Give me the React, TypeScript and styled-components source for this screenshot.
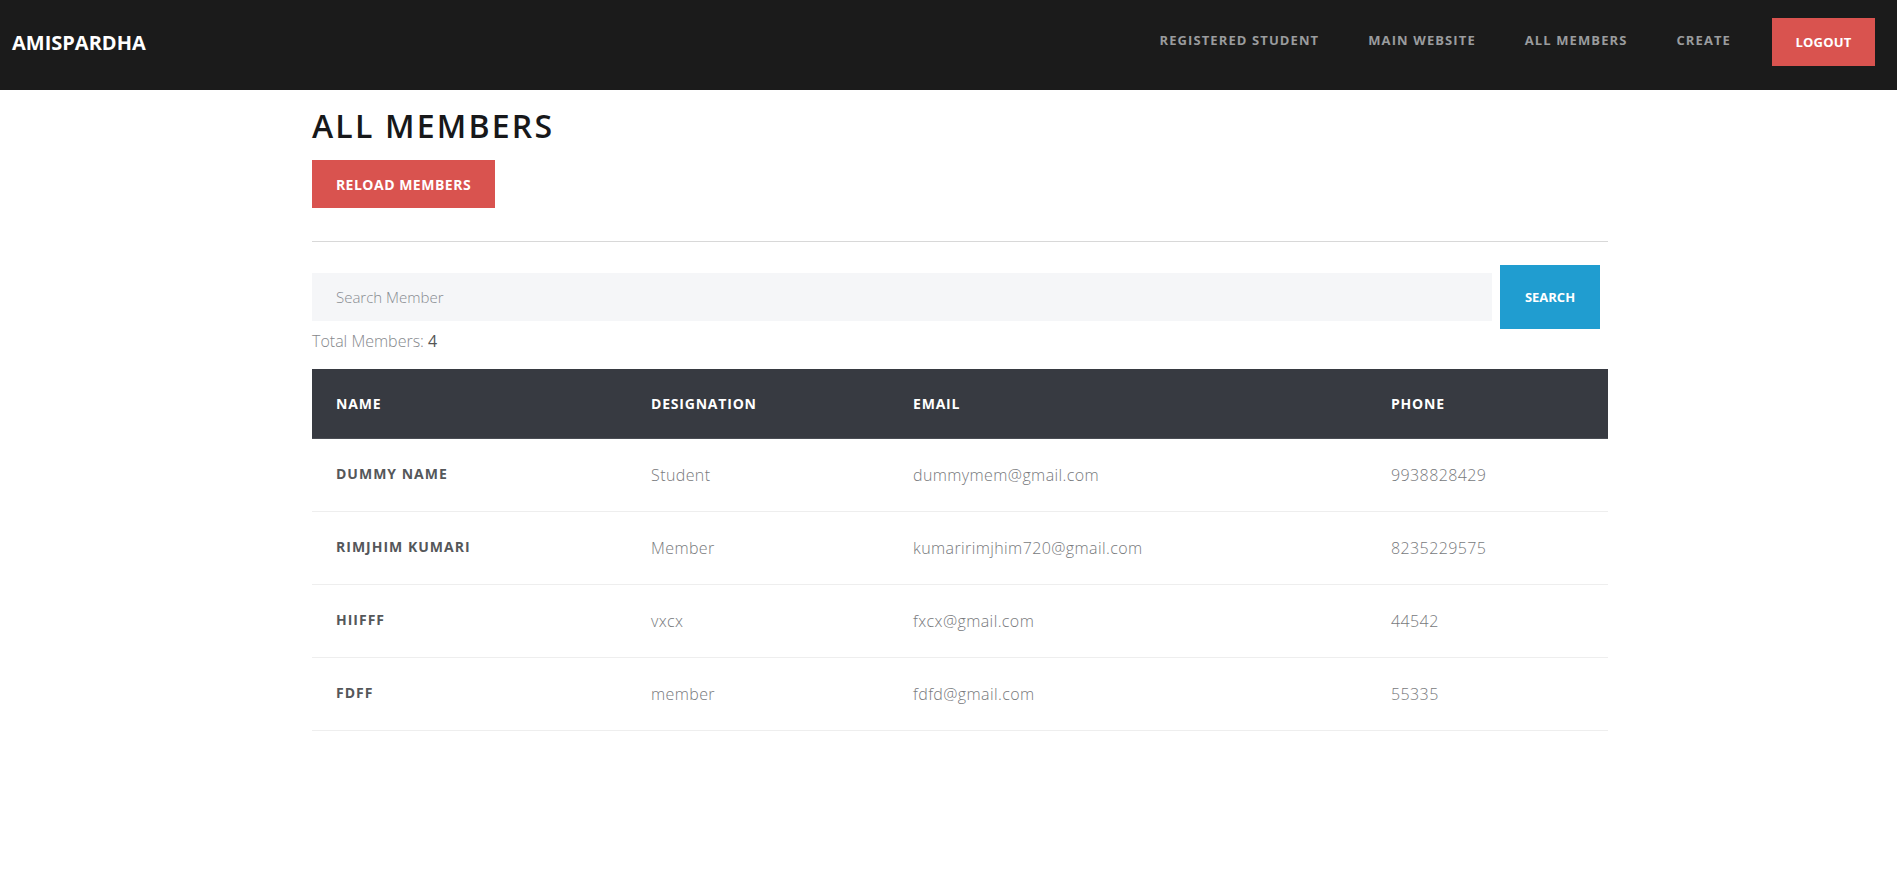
import React from "react";
import styled, { createGlobalStyle } from "styled-components";

const GlobalStyle = createGlobalStyle`
  html, body {
    margin: 0;
    padding: 0;
    background: #ffffff;
    font-family: "Open Sans", "Noto Sans", Arial, sans-serif;
  }
  * { box-sizing: border-box; }
`;

const NavBar = styled.header`
  height: 90px;
  background: #1b1b1b;
  display: flex;
  align-items: center;
  justify-content: space-between;
  padding: 0 22px 6px 12px;
`;

const Brand = styled.div`
  color: #ffffff;
  font-size: 20px;
  font-weight: 700;
`;

const NavRight = styled.nav`
  display: flex;
  align-items: center;
`;

const NavList = styled.ul`
  display: flex;
  align-items: center;
  gap: 49px;
  margin: 0 0 4px;
  padding: 0;
  list-style: none;
`;

const NavLink = styled.li`
  color: #9a9c9e;
  font-size: 13px;
  font-weight: 700;
  letter-spacing: 1.1px;
  text-transform: uppercase;
`;

const Button = styled.button<{ $color: string }>`
  border: none;
  background: ${(p) => p.$color};
  color: #ffffff;
  font-family: inherit;
  font-weight: 700;
  font-size: 13px;
  text-transform: uppercase;
  cursor: pointer;
  display: flex;
  align-items: center;
  justify-content: center;
  padding: 0;
`;

const LogoutButton = styled(Button)`
  width: 103px;
  height: 48px;
  margin-left: 41px;
  letter-spacing: 0.2px;
`;

const Container = styled.main`
  width: 1296px;
  margin-left: calc(50% - 636.5px);
`;

const Title = styled.h1`
  margin: 17px 0 15px;
  font-size: 32px;
  line-height: 38px;
  font-weight: 600;
  letter-spacing: 2.2px;
  color: #17181a;
`;

const ReloadButton = styled(Button)`
  width: 183px;
  height: 48px;
  font-size: 14px;
  letter-spacing: 0.5px;
`;

const Divider = styled.hr`
  border: none;
  border-top: 1px solid #d8d8d8;
  margin: 33px 0 0;
  height: 0;
`;

const SearchRow = styled.form`
  display: flex;
  align-items: center;
  gap: 8px;
  height: 64px;
  margin-top: 23px;
  padding-right: 8px;
`;

const SearchInput = styled.input`
  flex: 1;
  height: 48px;
  border: none;
  outline: none;
  background: #f5f6f8;
  padding: 0 0 0 24px;
  font-family: inherit;
  font-size: 15px;
  font-weight: 300;
  color: #555;
  &::placeholder {
    color: #878b91;
  }
`;

const SearchButton = styled(Button)`
  width: 100px;
  height: 64px;
`;

const Total = styled.p`
  margin: 0;
  font-size: 16px;
  line-height: 24px;
  font-weight: 300;
  color: #85888c;
`;

const TotalValue = styled.span`
  color: #555;
  font-weight: 400;
`;

const Table = styled.table`
  width: 100%;
  margin-top: 16px;
  border-collapse: collapse;
  table-layout: fixed;
`;

const HeadCell = styled.th`
  height: 69px;
  background: #373a41;
  border-bottom: 1px solid #4a4d54;
  padding: 0 25px 0 24px;
  text-align: left;
  color: #ffffff;
  font-size: 14px;
  font-weight: 700;
  letter-spacing: 0.8px;
  text-transform: uppercase;
`;

const Row = styled.tr`
  height: 73px;
  border-bottom: 1px solid #eeeeee;
`;

const Cell = styled.td<{ $strong?: boolean }>`
  padding: 0 25px 0 24px;
  font-size: ${(p) => (p.$strong ? "14px" : "16px")};
  font-weight: ${(p) => (p.$strong ? 700 : 300)};
  letter-spacing: ${(p) => (p.$strong ? "1px" : "0.4px")};
  color: ${(p) => (p.$strong ? "#55575a" : "#77797c")};
  text-transform: ${(p) => (p.$strong ? "uppercase" : "none")};
  padding-bottom: ${(p) => (p.$strong ? "2px" : "0")};
`;

const members = [
  { name: "Dummy Name", designation: "Student", email: "dummymem@gmail.com", phone: "9938828429" },
  { name: "Rimjhim Kumari", designation: "Member", email: "kumaririmjhim720@gmail.com", phone: "8235229575" },
  { name: "hiifff", designation: "vxcx", email: "fxcx@gmail.com", phone: "44542" },
  { name: "fdff", designation: "member", email: "fdfd@gmail.com", phone: "55335" },
];

export default function App() {
  return (
    <>
      <GlobalStyle />
      <NavBar>
        <Brand>AMISPARDHA</Brand>
        <NavRight>
          <NavList>
            <NavLink>Registered Student</NavLink>
            <NavLink>Main Website</NavLink>
            <NavLink>All Members</NavLink>
            <NavLink>Create</NavLink>
          </NavList>
          <LogoutButton $color="#d9534f">Logout</LogoutButton>
        </NavRight>
      </NavBar>
      <Container>
        <Title>ALL MEMBERS</Title>
        <ReloadButton $color="#d9534f">Reload Members</ReloadButton>
        <Divider />
        <SearchRow onSubmit={(e) => e.preventDefault()}>
          <SearchInput placeholder="Search Member" />
          <SearchButton $color="#209dd0" type="submit">Search</SearchButton>
        </SearchRow>
        <Total>
          Total Members: <TotalValue>{members.length}</TotalValue>
        </Total>
        <Table>
          <colgroup>
            <col style={{ width: "315px" }} />
            <col style={{ width: "262px" }} />
            <col style={{ width: "478px" }} />
            <col />
          </colgroup>
          <thead>
            <tr>
              <HeadCell>Name</HeadCell>
              <HeadCell>Designation</HeadCell>
              <HeadCell>Email</HeadCell>
              <HeadCell>Phone</HeadCell>
            </tr>
          </thead>
          <tbody>
            {members.map((m) => (
              <Row key={m.email}>
                <Cell $strong>{m.name}</Cell>
                <Cell>{m.designation}</Cell>
                <Cell>{m.email}</Cell>
                <Cell>{m.phone}</Cell>
              </Row>
            ))}
          </tbody>
        </Table>
      </Container>
    </>
  );
}
